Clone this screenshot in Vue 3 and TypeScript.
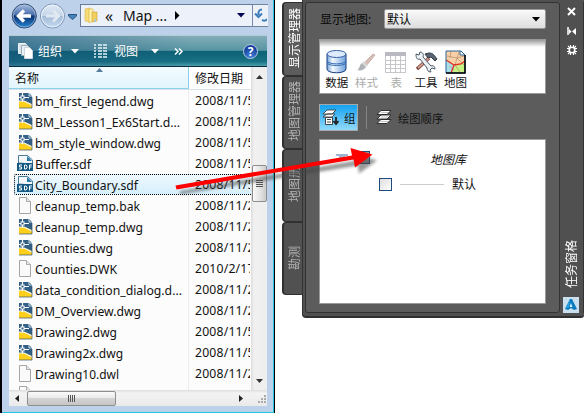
<script setup lang="ts">
interface FileRow {
  name: string
  date: string
  kind: 'dwg' | 'sdf' | 'doc'
  width: number
  selected?: boolean
}

const files: FileRow[] = [
  { name: 'bm_first_legend.dwg', date: '2008/11/5', kind: 'dwg', width: 119 },
  { name: 'BM_Lesson1_Ex6Start.d...', date: '2008/11/5', kind: 'dwg', width: 145 },
  { name: 'bm_style_window.dwg', date: '2008/11/5', kind: 'dwg', width: 126 },
  { name: 'Buffer.sdf', date: '2008/11/5', kind: 'sdf', width: 56 },
  { name: 'City_Boundary.sdf', date: '2008/11/5', kind: 'sdf', width: 103, selected: true },
  { name: 'cleanup_temp.bak', date: '2008/11/2', kind: 'doc', width: 105 },
  { name: 'cleanup_temp.dwg', date: '2008/11/2', kind: 'dwg', width: 108 },
  { name: 'Counties.dwg', date: '2008/11/2', kind: 'dwg', width: 78 },
  { name: 'Counties.DWK', date: '2010/2/17', kind: 'doc', width: 82 },
  { name: 'data_condition_dialog.d...', date: '2008/11/2', kind: 'dwg', width: 147 },
  { name: 'DM_Overview.dwg', date: '2008/11/2', kind: 'dwg', width: 106 },
  { name: 'Drawing2.dwg', date: '2008/11/5', kind: 'dwg', width: 82 },
  { name: 'Drawing2x.dwg', date: '2008/11/5', kind: 'dwg', width: 88 },
  { name: 'Drawing10.dwl', date: '2008/11/2', kind: 'doc', width: 84 },
  { name: '', date: '', kind: 'doc', width: 0 }
]

const tabs: string[] = ['显示管理器', '地图管理器', '地图册', '勘测']
</script>

<template>
  <div class="screen">
    <section class="explorer">
      <header class="address">
        <svg class="nav" width="80" height="32" viewBox="0 0 80 32">
          <defs>
            <linearGradient id="back" x2="0" y2="1">
              <stop offset="0" stop-color="#a9bfdf" /><stop offset=".45" stop-color="#486eac" />
              <stop offset=".5" stop-color="#0c3170" /><stop offset="1" stop-color="#2488d8" />
            </linearGradient>
            <linearGradient id="fwd" x2="0" y2="1">
              <stop offset="0" stop-color="#e1eaf6" /><stop offset=".48" stop-color="#c5d5e9" />
              <stop offset=".5" stop-color="#a1b9d6" /><stop offset="1" stop-color="#c7ddf1" />
            </linearGradient>
          </defs>
          <circle cx="24.3" cy="16" r="12" fill="url(#back)" stroke="#334a70" />
          <circle cx="24.3" cy="16" r="11" fill="none" stroke="#a6bddf" stroke-opacity=".7" />
          <path d="M31 16H19M24 10.500l-5.500 5.500L24 21.500" fill="none" stroke="#fff" stroke-width="3.400" />
          <circle cx="52.500" cy="16" r="12" fill="url(#fwd)" stroke="#7c94b6" />
          <circle cx="52.500" cy="16" r="11" fill="none" stroke="#edf3fb" />
          <path d="M46 16h12M53 10.500l5.500 5.500L53 21.500" fill="none" stroke="#e0e8f1" stroke-width="3" />
          <path d="M68.500 14.500h8v1.500l-4 3.500L68.500 16z" fill="#4286bd" stroke="#24517f" />
        </svg>
        <div class="crumb">
          <svg width="15" height="17" viewBox="0 0 15 17">
            <path d="M1 2l5-1v14l-5-1z" fill="#f6dc79" stroke="#d8b64f" stroke-width=".6" />
            <path d="M5 2h4v12l-4 2z" fill="#fff2aa" stroke="#d7ae38" stroke-width=".6" />
            <path d="M8 5h5v9l-5 1z" fill="#f2cf5e" stroke="#cda339" stroke-width=".6" />
            <path d="M10.500 12h1.500v3h-1.500z" fill="#a8c8df" />
          </svg>
          <span class="chev">«</span><span class="map">Map ...</span>
          <svg class="tri" width="6" height="9"><path d="M1 0v9l4.500-4.500z" fill="#000" /></svg>
          <svg class="drop" width="8" height="5"><path d="M0 0h8L4 4.500z" fill="#000052" /></svg>
        </div>
        <div class="refresh">
          <svg width="14" height="20" viewBox="0 0 14 20"><path d="M9 4.500C6 4.500 5 7 5.500 10M2 8.500l3.500 3.500L9 8.500" fill="none" stroke="#3d7dbc" stroke-width="2" /><path d="M9 15c2 1 4 1 5-1" fill="none" stroke="#3d7dbc" stroke-width="2" /></svg>
        </div>
      </header>

      <div class="body">
        <div class="toolbar">
          <svg class="pages" width="15" height="16" viewBox="0 0 15 16">
            <path d="M.5.5h7l1 1v9h-8z" fill="#d7e2e9" stroke="#eef5f8" /><path d="M3.500 2.500h6l1 1v9h-7z" fill="#e9f0f4" stroke="#9caebb" />
            <path d="M6.500 4.500h5l3 3v8h-8z" fill="#fff" stroke="#cad5dc" />
          </svg>
          <span class="organize">组织</span>
          <svg class="d1" width="8" height="5"><path d="M0 0h8L4 4.500z" fill="#fff" /></svg>
          <svg class="views" width="14" height="14" viewBox="0 0 14 14">
            <path d="M0 1h2M0 4h2M0 7h2M0 10h2M0 13h2M4 1h4M4 4h4M4 7h4M4 10h4M4 13h4M9 1h4M9 4h4M9 7h4M9 10h4M9 13h4" stroke="#e6f4f8" stroke-width="1.400" />
          </svg>
          <span class="view-label">视图</span>
          <svg class="d2" width="8" height="5"><path d="M0 0h8L4 4.500z" fill="#fff" /></svg>
          <svg class="more" width="9" height="7"><path d="M1 .5l3 3-3 3M5 .5l3 3-3 3" fill="none" stroke="#fff" stroke-width="1.500" /></svg>
          <span class="help">?</span>
        </div>

        <div class="listing">
          <div class="table">
            <div class="head">
              <span class="c1">名称</span><span class="c2">修改日期</span>
              <svg class="sort" width="7" height="4"><path d="M0 4l3.500-4L7 4z" fill="#587c99" /></svg>
            </div>
            <div class="rows">
              <div v-for="(f, i) in files" :key="i" class="row" :class="{ selected: f.selected }">
                <svg v-if="f.kind === 'dwg'" class="icon" width="16" height="17" viewBox="0 0 16 17">
                  <path d="M2 1h10l3 3v12H2z" fill="#315f86" />
                  <path d="M2 9h6l7 3v4H2z" fill="#ffd01b" />
                  <path d="M2 9h5l8 4" fill="none" stroke="#eef3f5" stroke-width="1.200" />
                  <path d="M5.500 1v3M5.500 7v3M2 5.500h2M7 5.500h5" stroke="#fff" stroke-width="1.200" />
                  <rect x="4" y="4" width="3" height="3" fill="#2d587d" stroke="#fff" />
                  <path d="M12 1v3h3" stroke="#d4e2ea" fill="none" /><path d="M2 16h13V5" fill="none" stroke="#33546b" stroke-width=".7" />
                </svg>
                <svg v-else-if="f.kind === 'sdf'" class="icon" width="16" height="17" viewBox="0 0 16 17">
                  <path d="M1.500 8V.5h9L15.500 5v4z" fill="#f4f8fa" stroke="#477b9a" />
                  <path d="M10 1l5 5h-5z" fill="#2878aa" /><path d="M0 8h16v8H0z" fill="#145984" />
                  <path d="M5 10H2.500v2h2v2H2M7.500 10H9l1 1v2l-1 1H7.500zM12.500 14.500V10H15M12.500 12H14.500" fill="none" stroke="#fff" stroke-width="1" />
                </svg>
                <svg v-else class="icon" width="16" height="17" viewBox="0 0 16 17">
                  <path d="M2.500.5h7l4 4v12h-11z" fill="#fafafa" stroke="#a6a6a6" /><path d="M9.500.5v4h4" fill="#e7e7e7" stroke="#aaa" />
                </svg>
                <span class="name"><svg width="152" height="20"><text x="0" y="15" :textLength="f.width || undefined" lengthAdjust="spacingAndGlyphs">{{ f.name }}</text></svg></span>
                <span class="date">{{ f.date }}</span>
              </div>
            </div>
          </div>
          <div class="vscroll">
            <svg width="7" height="4"><path d="M0 4l3.500-4L7 4z" fill="#333" /></svg>
            <div class="vthumb"><i></i><i></i><i></i><i></i></div>
            <svg width="7" height="4"><path d="M0 0h7L3.500 4z" fill="#333" /></svg>
          </div>
        </div>
        <div class="hscroll">
          <svg width="5" height="7"><path d="M4 0v7L0 3.500z" fill="#222" /></svg>
          <div class="hthumb"><i></i><i></i><i></i><i></i></div>
          <svg class="right" width="5" height="7"><path d="M0 0v7l4-3.500z" fill="#222" /></svg>
          <svg class="grip" width="10" height="10"><path d="M7 1h2M4 4h2M7 4h2M1 7h2M4 7h2M7 7h2" stroke="#aaa" stroke-width="2" /></svg>
        </div>
      </div>
    </section>

    <section class="palette">
      <nav class="tabs">
        <div v-for="(t, i) in tabs" :key="t" class="tab" :class="{ active: i === 0 }"><span>{{ t }}</span></div>
      </nav>
      <div class="panel">
        <main class="inner">
          <div class="select-row">
            <label>显示地图:</label>
            <div class="select"><span>默认</span><svg width="8" height="5"><path d="M0 0h8L4 4.500z" fill="#000" /></svg></div>
          </div>
          <div class="ribbon">
            <div class="tool">
              <svg width="24" height="26" viewBox="0 0 24 26">
                <defs><linearGradient id="disk"><stop offset="0" stop-color="#77a5db" /><stop offset=".3" stop-color="#f4faff" /><stop offset="1" stop-color="#6d9fdc" /></linearGradient></defs>
                <path d="M2 5v15c0 5 19 5 19 0V5z" fill="url(#disk)" stroke="#1c3f81" />
                <ellipse cx="11.500" cy="5" rx="9.500" ry="3.500" fill="#dceafb" stroke="#3764a8" />
                <path d="M2 11.500c0 4.500 19 4.500 19 0M2 13.500c0 4 19 4 19 0" fill="none" stroke="#376eb5" />
              </svg><span>数据</span>
            </div>
            <div class="tool off">
              <svg width="24" height="26" viewBox="0 0 24 26"><path d="M9 14L18 5l2 1-9 11z" fill="#d7bdb4" stroke="#c7b4ae" /><path d="M7 14l4 4c-2 3-5 4-9 3 3-1 2-5 5-7z" fill="#aeb2b6" /><path d="M8 13l4 4" stroke="#d5d5d5" stroke-width="2" /></svg><span>样式</span>
            </div>
            <div class="tool off">
              <svg width="24" height="26" viewBox="0 0 24 26"><path d="M1.500 3.500h20v20h-20zM6.500 7v16M11.500 7v16M16.500 7v16M1.500 11.500h20M1.500 15.500h20M1.500 19.500h20" fill="#fff" stroke="#c5c5ca" /><path d="M1 3h21v4H1z" fill="#b9b9c1" /></svg><span>表</span>
            </div>
            <div class="tool">
              <svg width="24" height="26" viewBox="0 0 24 26">
                <path d="M3 20L15 9" stroke="#74403a" stroke-width="3.500" /><path d="M4 19L15 9" stroke="#d49b8b" stroke-width="1.800" />
                <path d="M11 5l4-1c4 0 5 2 8 6l-2 2-4-4-3 1z" fill="#5a6470" stroke="#303943" />
                <path d="M2 5l3 1 1-3c3 0 4 3 3 5l8 9c3-1 4 1 4 3l-3-1-2 2 1 2c-3 0-4-2-4-4L6 10C3 11 2 9 2 5z" fill="#edf1f4" stroke="#4b5968" />
              </svg><span>工具</span>
            </div>
            <div class="tool">
              <svg width="24" height="26" viewBox="0 0 24 26">
                <path d="M2 2h15l4 4v18H2z" fill="#fad1a6" /><path d="M2 11l9 6-3 7H2z" fill="#a7e0e8" /><path d="M11 17l10-4v11H8z" fill="#c5f283" />
                <path d="M7 2l-1 7M3 7l10 2 7-2M13 9l-2 7 5 7M5 17l5 4M15 3l-2 6 8 8" fill="none" stroke="#bc967a" stroke-width=".8" />
                <path d="M2 11l8 5 7-1 4-3M10 16l-3 8" fill="none" stroke="#e32f25" stroke-width="1.300" />
                <path d="M16 2v4h5" fill="#fff" /><path d="M17 2H2v22h19V6zM16 2v4h5" fill="none" stroke="#286497" stroke-width="1" /><path d="M2 24h19V6" fill="none" stroke="#000" stroke-width="1.500" />
              </svg><span>地图</span>
            </div>
          </div>
          <div class="modes">
            <button class="group">
              <svg width="17" height="17" viewBox="0 0 17 17"><path d="M5 1h9l-4 4H1zM5 5h8l-3 3H1z" fill="#fff" stroke="#333" stroke-width=".8" /><path d="M3.500 8.500h7v7h-7zM5 10.500h4M5 13h4" fill="#fff" stroke="#333" stroke-width=".9" /><path d="M14 8v7M11.500 12l2.500 3 2.500-3" fill="none" stroke="#222" stroke-width="1.800" /></svg>
              <span>组</span>
            </button>
            <i class="rule"></i>
            <svg class="layers" width="17" height="17" viewBox="0 0 17 17"><path d="M5 10.500h10l-4 4H1zM5 6h10l-4 4H1zM5 1.500h10l-4 4H1z" fill="#fff" stroke="#252525" stroke-width=".9" /><path d="M5 3.500h7M5 8h7M5 12.500h7" stroke="#aaa" stroke-width=".7" /></svg>
            <span>绘图顺序</span>
          </div>
          <div class="tree">
            <div class="library"><svg width="12" height="6"><path d="M0 1h12M3 3h6" stroke="#376aa3" /></svg><i class="box"></i><em>地图库</em></div>
            <div class="layer"><i class="box"></i><i class="line"></i><span>默认</span></div>
          </div>
        </main>
        <aside class="title">
          <svg width="10" height="49" viewBox="0 0 10 49">
            <path d="M1 2l7 7M1 9l7-7" stroke="#fff" stroke-width="2" />
            <path d="M1 21v8" stroke="#fff" stroke-width="1.500" /><path d="M2 23v5l2.500-2.500zM9 22v7L5 25.500z" fill="#fff" />
            <circle cx="5" cy="44" r="2.800" fill="none" stroke="#fff" stroke-width="1.600" /><path d="M3.500 39v2.500M6.500 39v2.500M3.500 46.500V49M6.500 46.500V49M0 42.500h2.500M0 45.500h2.500M7.500 42.500H10M7.500 45.500H10M1 40l2 2M9 40L7 42M1 48l2-2M9 48l-2-2" stroke="#fff" stroke-width="1.100" />
          </svg>
          <span>任务窗格</span>
          <svg class="logo" width="16" height="16" viewBox="0 0 16 16"><path d="M0 0h16v16H0z" fill="#cae0ef" /><path d="M7 2L2 12l3 1 3-2 3 2 3-1L9 2z" fill="#087abe" /><path d="M8 6l-1.500 4h3z" fill="#d9f2ff" /><path d="M7 2L2 12l4-2z" fill="#2ba2df" /></svg>
        </aside>
      </div>
    </section>

    <svg class="pointer" width="210" height="60" viewBox="170 140 210 60">
      <defs><filter id="shade" x="-10%" y="-40%" width="120%" height="200%"><feGaussianBlur stdDeviation="1.600" /></filter></defs>
      <g transform="translate(4 5.500)" fill="#444" opacity=".55" filter="url(#shade)"><path d="M176 185.500L352 155l-1-6.500 22 6.500-18 13-1-8L176 189z" /></g>
      <path d="M175.500 185.500L352 155.500l-1.500-7.500L372.500 154.500 355 167.500l-1.500-8L176.500 189.500z" fill="#f00" />
    </svg>
  </div>
</template>

<style>
body { background: #fff; }
</style>
<style scoped>
* { box-sizing: border-box; }
svg { display: block; flex: none; }
.screen { position: relative; width: 585px; height: 413px; overflow: hidden; display: flex; background: #fff; color: #111; font: 12px "Noto Sans", "Noto Sans CJK SC", sans-serif; }
.explorer { width: 275px; height: 413px; flex: none; border-left: 2px solid #000; border-right: 1px solid #000; background: #bdd1ea; box-shadow: inset -1px -1px #20c4dc; }
.address { height: 35px; display: flex; }
.nav { margin-left: -2px; }
.crumb { width: 173px; height: 23px; margin-top: 4px; display: flex; align-items: center; background: #edf2fa; border: 1px solid #667b98; border-right-color: #768aab; padding-left: 3px; }
.chev { margin-left: 6px; width: 18px; font-size: 16px; line-height: 20px; }
.map { width: 48px; font-size: 14px; }
.tri { margin-left: 3px; }
.drop { margin-left: 57px; }
.refresh { width: 15px; height: 23px; margin-top: 4px; border: 1px solid #70849d; border-width: 1px 0; background: #edf2fa; overflow: hidden; }
.body { width: 258px; margin-left: 7px; height: 371px; background: #fff; }
.toolbar { height: 32px; display: flex; align-items: center; padding-left: 9px; color: #fff; font-size: 12px; background: linear-gradient(#84adb9, #5795a3 48%, #0d6174 50%, #187184 85%, #4c9fa7); border-top: 1px solid #b1ccd4; border-bottom: 1px solid #092b48; position: relative; }
.toolbar::before { content: ''; position: absolute; inset: 0; background: linear-gradient(90deg, #18517b88, transparent 70%); }
.toolbar > * { position: relative; flex: none; }
.organize { margin-left: 5px; width: 32px; }
.d1 { margin-left: 1px; }
.views { margin-left: 15px; }
.view-label { margin-left: 6px; width: 37px; }
.more { margin-left: 15px; }
.help { width: 15px; height: 15px; margin-left: 60px; border: 1px solid #bbcce3; border-radius: 50%; background: radial-gradient(circle at 50% 90%, #4582dc, #15409d 70%); font-size: 12px; font-weight: bold; line-height: 13px; text-align: center; }
.listing { height: 323px; display: flex; }
.table { width: 242px; overflow: hidden; background: #fcfcfc; }
.head { height: 23px; position: relative; display: flex; line-height: 23px; background: linear-gradient(90deg, #eef9ff 0 180px, #fff 180px); border-bottom: 1px solid #dbe2e8; }
.c1 { width: 180px; padding-left: 6px; border-right: 1px solid #8bd0ed; border-bottom: 1px solid #8bd0ed; background: linear-gradient(#f4fcff, #e1f4fc); }
.c2 { padding-left: 6px; white-space: nowrap; }
.sort { position: absolute; left: 87px; top: 1px; }
.rows { height: 300px; overflow: hidden; background: linear-gradient(90deg, transparent 179px, #eee 179px 180px, transparent 180px); }
.row { height: 21px; display: flex; align-items: center; padding-left: 8px; }
.name { width: 152px; height: 20px; margin-left: 2px; font-size: 13px; }
.name text { fill: #111; }
.date { margin-left: 8px; width: 55px; flex: none; overflow: hidden; white-space: nowrap; font-size: 12.200px; letter-spacing: .2px; line-height: 20px; }
.selected { margin-left: 5px; padding-left: 2px; border: 1px dotted #000; border-right: 0; background: linear-gradient(#eff9fe, #d5effc); border-radius: 2px 0 0 2px; }
.vscroll { width: 16px; padding: 8px 0 7px; display: flex; flex-direction: column; align-items: center; background: linear-gradient(90deg, #ddd, #f0f0f0 3px, #eee); }
.vscroll > svg:last-child { margin-top: auto; }
.vthumb, .hthumb { border: 1px solid #8d8d8d; border-radius: 2px; background: linear-gradient(90deg, #fafafa, #e5e5e5 50%, #ccc); display: flex; align-items: center; justify-content: center; gap: 1px; }
.vthumb { width: 15px; height: 37px; margin-top: 86px; flex-direction: column; }
.vthumb i { width: 7px; height: 1px; background: #555; }
.hscroll { height: 16px; display: flex; align-items: center; padding-left: 6px; background: linear-gradient(#ddd, #f3f3f3 3px, #eaeaea); }
.hthumb { width: 90px; height: 15px; margin-left: 7px; background: linear-gradient(#fafafa, #e8e8e8 48%, #d4d4d4 50%, #c5c5c5); }
.hthumb i { width: 1px; height: 7px; background: #555; }
.right { margin-left: 123px; }
.grip { margin-left: 13px; margin-top: 4px; }
.palette { width: 302px; height: 319px; margin-left: 7px; display: flex; }
.tabs { width: 20px; padding-top: 2px; }
.tab { width: 24px; height: 73px; display: flex; align-items: center; justify-content: center; border: 1px solid #303030; border-left-width: 2px; border-radius: 4px 0 0 4px; background: #515151; color: #b2b2b2; }
.tab span, .title span { writing-mode: vertical-rl; text-orientation: sideways; transform: rotate(180deg); font-size: 12px; line-height: 16px; white-space: nowrap; }
.tab span { margin-top: -2px; }
.tab.active { background: #5c5c5c; color: #fff; height: 74px; }
.tab:last-child span { margin-top: 0; }
.panel { position: relative; width: 282px; height: 318px; flex: none; display: flex; padding: 2px 0 3px 2px; border-left: 1px solid #333; border-bottom: 2px solid #303030; background: #505050; border-radius: 0 0 3px 4px; }
.inner { width: 255px; border: 1px solid #333; background: #5c5c5c; border-radius: 3px; padding: 6px 13px 0 13px; }
.select-row { height: 20px; display: flex; align-items: center; color: #080808; }
.select-row label { width: 65px; padding-left: 1px; font-size: 12px; }
.select { width: 162px; height: 20px; padding: 0 5px 0 2px; display: flex; justify-content: space-between; align-items: center; border: 1px solid #999; background: linear-gradient(#fafafa, #ddd); border-radius: 2px; }
.ribbon { width: 227px; height: 55px; margin-top: 10px; padding: 9px 0 0 2px; display: flex; background: linear-gradient(#9c9c9c, #fff 7px); border: 1px solid #999; }
.tool { width: 29.700px; flex: none; display: flex; flex-direction: column; align-items: center; line-height: 16px; font-size: 11.500px; }
.tool span { white-space: nowrap; }
.off { color: #aaa; }
.modes { height: 27px; margin-top: 10px; display: flex; align-items: center; }
.group { width: 39px; height: 27px; padding: 0 2px 0 2px; display: flex; align-items: center; gap: 5px; border: 1px solid #a6a9aa; background: linear-gradient(#13a2ef, #92d9fb); color: #111; font: inherit; font-size: 11.500px; }
.rule { width: 1px; height: 23px; margin-left: 8px; background: #858585; }
.layers { margin-left: 9px; }
.modes > span { margin-left: 5px; font-size: 11.300px; }
.tree { width: 227px; height: 165px; margin-top: 8px; background: #fff; border: 1px solid #999; }
.library { display: flex; align-items: center; height: 34px; padding: 4px 0 0 16px; }
.library svg { margin-bottom: 4px; }
.box { width: 13px; height: 13px; border: 1px solid #1e4c7f; background: linear-gradient(135deg, #ddd, #fff); }
.library .box { margin-left: 9px; margin-bottom: 4px; background: #999; }
.library em { margin-left: 60px; }
.layer { height: 20px; display: flex; align-items: center; padding-left: 59px; }
.line { width: 44px; height: 1px; margin-left: 8px; background: #ccc; }
.layer span { margin-left: 8px; }
.title { width: 24px; padding: 4px 0 0 7px; display: flex; flex-direction: column; color: #fff; border-right: 1px solid #333; }
.title span { margin: 184px 0 0 -3px; height: 49px; }
.logo { margin: 9px 0 0 -4px; }
.pointer { position: absolute; left: 170px; top: 140px; }
</style>
